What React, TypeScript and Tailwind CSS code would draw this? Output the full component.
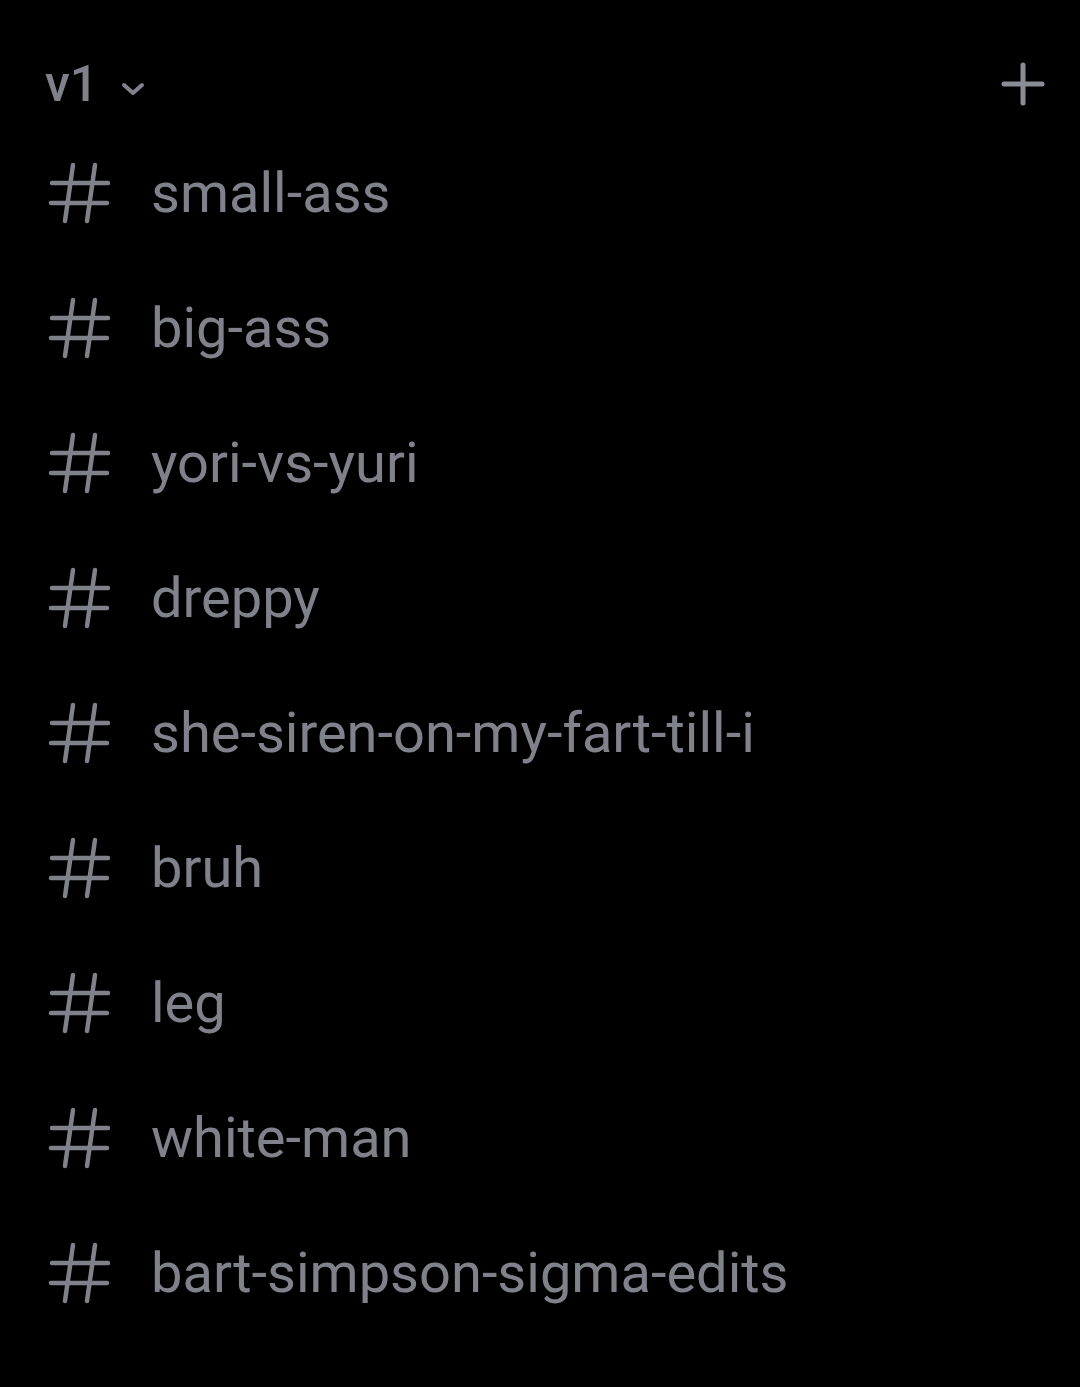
import React from "react";

const channels = [
  "small-ass",
  "big-ass",
  "yori-vs-yuri",
  "dreppy",
  "she-siren-on-my-fart-till-i",
  "bruh",
  "leg",
  "white-man",
  "bart-simpson-sigma-edits",
];

function Hash() {
  return (
    <svg width="62" height="64" viewBox="0 0 62 64" fill="none" className="shrink-0">
      <g stroke="#7f828a" strokeWidth="4.5" strokeLinecap="round">
        <line x1="4" y1="22" x2="60" y2="22" />
        <line x1="3" y1="42" x2="59" y2="42" />
        <line x1="25" y1="4" x2="17" y2="60" />
        <line x1="47" y1="4" x2="39" y2="60" />
      </g>
    </svg>
  );
}

export default function App() {
  return (
    <div
      className="w-[1080px] h-[1387px] bg-black overflow-hidden pt-[43px]"
      style={{ fontFamily: "Roboto, 'Noto Sans', sans-serif" }}
    >
      <div className="h-[82px] flex items-center justify-between pl-[45px] pr-[35px]">
        <div className="flex items-center gap-[22px]">
          <span className="text-[50px] font-medium text-[#7f828a] leading-none">v1</span>
          <svg width="26" height="16" viewBox="0 0 26 16" fill="none" className="mt-[10px]">
            <path d="M4 4 L13 12 L22 4" stroke="#7f828a" strokeWidth="4" strokeLinecap="round" strokeLinejoin="round" />
          </svg>
        </div>
        <svg width="44" height="44" viewBox="0 0 44 44" fill="none">
          <g stroke="#8a8d95" strokeWidth="5" strokeLinecap="round">
            <line x1="3" y1="22" x2="41" y2="22" />
            <line x1="22" y1="3" x2="22" y2="41" />
          </g>
        </svg>
      </div>
      <div className="flex flex-col">
        {channels.map((c) => (
          <div key={c} className="h-[135px] flex items-center pl-[48px] gap-[41px]">
            <Hash />
            <span className="text-[56px] text-[#7f828a] leading-normal whitespace-nowrap">{c}</span>
          </div>
        ))}
      </div>
    </div>
  );
}
